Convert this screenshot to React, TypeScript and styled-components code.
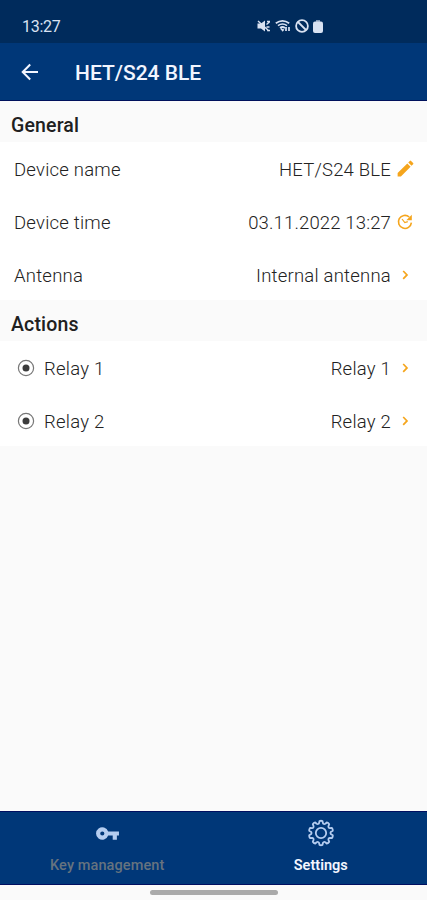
import React from "react";
import styled, { createGlobalStyle } from "styled-components";

const Global = createGlobalStyle`
  *{box-sizing:border-box}
  body{margin:0;background:#fafafa;font-family:Roboto,"Liberation Sans",sans-serif;color:#222}
  svg{display:block;flex:none}
`;
const Screen = styled.div`
  width:100%;height:900px;display:flex;flex-direction:column;background:#fafafa;overflow:hidden;
`;
const StatusBar = styled.header`
  height:43px;flex:none;background:#002b5c;color:#d9e2f2;display:flex;align-items:center;
  padding:9px 104px 0 22px;font-size:16px;justify-content:space-between;
`;
const Clock = styled.span`letter-spacing:-.25px;`;
const StatusIcons = styled.div`display:flex;align-items:center;gap:4px;`;
const AppBar = styled.div`
  height:58px;flex:none;background:#003778;border-bottom:1px solid #00115c;color:#f2f5ff;
  display:flex;align-items:center;padding-left:21px;
`;
const Title = styled.h1`
  margin:2px 0 0 36px;font-size:21px;font-weight:500;letter-spacing:0;line-height:24px;
`;
const SectionTitle = styled.h2<{ $tall?: boolean }>`
  margin:0;height:41px;flex:none;padding:${p => (p.$tall ? "4px" : "8px")} 0 0 11px;
  font-size:19.5px;line-height:${p => (p.$tall ? "41px" : "33px")};font-weight:500;letter-spacing:.15px;color:#202020;
`;
const List = styled.div<{ $height: number }>`
  height:${p => p.$height}px;flex:none;background:#fff;
`;
const Row = styled.div`
  height:53px;display:flex;align-items:center;padding:2px 12px 0 14px;font-size:18.5px;line-height:24px;
`;
const Label = styled.span<{ $spacing?: number }>`
  font-weight:350;letter-spacing:${p => p.$spacing ?? 0.22}px;
`;
const Value = styled(Label)`margin-left:auto;`;
const Trailing = styled.span`
  width:20px;height:20px;margin:-2px 0 0 4px;display:flex;align-items:center;justify-content:center;color:#f5a51c;
`;
const Radio = styled.svg`margin:-2px 9px 0 3px;`;
const Spacer = styled.div`flex:1;`;
const Tabs = styled.nav`
  height:74px;flex:none;display:flex;background:#003778;border:solid #000f60;border-width:1px 0;
`;
const Tab = styled.div<{ $active?: boolean }>`
  flex:1;display:flex;flex-direction:column;align-items:center;padding:7px 0 0 1px;
  color:${p => (p.$active ? "#f4f6ff" : "#66737f")};font-size:14.5px;line-height:18px;
  font-weight:${p => (p.$active ? 600 : 500)};letter-spacing:${p => (p.$active ? 0 : 0.1)}px;
`;
const TabIcon = styled.div`height:28px;margin-bottom:10px;display:flex;align-items:center;color:#b5cdf0;`;
const HomeArea = styled.div`height:15px;flex:none;display:flex;justify-content:center;padding-top:5px;`;
const HomeBar = styled.div`width:128px;height:5px;border-radius:3px;background:#aaa;`;

const Pencil = () => (
  <svg width="21" height="21" viewBox="0 0 24 24" fill="currentColor">
    <path d="M3 17.25V21h3.75L17.81 9.94l-3.75-3.75L3 17.25zM20.71 7.04a1 1 0 0 0 0-1.41l-2.34-2.34a1 1 0 0 0-1.41 0l-1.83 1.83 3.75 3.75 1.83-1.83z" />
  </svg>
);
const Refresh = () => (
  <svg width="18" height="18" viewBox="0 0 18 18" fill="none" stroke="currentColor" strokeWidth="1.6">
    <path d="M15.4 9.6A6.5 6.5 0 1 1 13.2 4" />
    <path d="M6 6 8.8 9.6l3-1" strokeWidth="1.2" />
    <path d="M15.8 1.7v5.5h-5.5z" fill="currentColor" stroke="none" />
  </svg>
);
const Chevron = () => (
  <svg width="7" height="10" viewBox="0 0 7 10" fill="none" stroke="currentColor" strokeWidth="1.7">
    <path d="m1.2 1 3.8 3.9-3.8 3.9" />
  </svg>
);
const RadioMark = () => (
  <Radio width="18" height="18" viewBox="0 0 18 18">
    <circle cx="9" cy="9" r="7.6" fill="none" stroke="#777" strokeWidth="1.2" />
    <circle cx="9" cy="9" r="3.5" fill="#3c3c3c" />
  </Radio>
);
const toothCount = 10;
const gearPath = Array.from({ length: toothCount }, (_, i) => {
  const step = (Math.PI * 2) / toothCount;
  const at = (r: number, offset: number) => {
    const a = i * step - Math.PI / 2 + offset * step;
    return `${(14 + r * Math.cos(a)).toFixed(2)} ${(14 + r * Math.sin(a)).toFixed(2)}`;
  };
  return `${i ? "L" : "M"}${at(12, -0.2)}Q${at(12.6, 0)} ${at(12, 0.2)}L${at(10.2, 0.3)}Q${at(8.8, 0.5)} ${at(10.2, 0.7)}`;
}).join("") + "Z";
const Gear = () => (
  <svg width="28" height="28" viewBox="0 0 28 28" fill="none" stroke="currentColor" strokeWidth="1.8" strokeLinejoin="round">
    <path d={gearPath} /><circle cx="14" cy="14" r="5.2" />
  </svg>
);
const Key = () => (
  <svg width="25" height="25" viewBox="0 0 24 24" fill="currentColor">
    <path d="M12.65 10A6 6 0 1 0 12.65 14H17v4h4v-4h2v-4H12.65zM7 14a2 2 0 1 1 0-4 2 2 0 0 1 0 4z" />
  </svg>
);

export default function App() {
  return (
    <>
      <Global />
      <Screen>
        <StatusBar>
          <Clock>13:27</Clock>
          <StatusIcons>
            <svg width="14" height="14" viewBox="0 0 14 14" fill="currentColor" stroke="currentColor">
              <path d="M.5 4.5H4l4-3v11l-4-3H.5z" stroke="none" />
              <path d="m1 2 11 10M9.5 5.5 12.5 3M9.5 8h3M10 2.5h3M10 11.5h3" strokeWidth="1.4" />
            </svg>
            <svg width="16" height="14" viewBox="0 0 16 14" fill="none" stroke="currentColor" strokeWidth="1.7">
              <path d="M.8 4.2Q7.5-.6 14.2 4.2M3 6.6q4.5-3.2 9 0M5 9q2.5-2 5 0" />
              <path d="m6 9.5 1.7 2 1-1.2" /><path d="M11 8v4M14 12V8" />
            </svg>
            <svg width="14" height="14" viewBox="0 0 14 14" fill="none" stroke="currentColor" strokeWidth="1.8">
              <circle cx="7" cy="7" r="5.9" /><path d="m3 3 8 8" />
            </svg>
            <svg width="10" height="14" viewBox="0 0 10 14" fill="currentColor">
              <rect x="3" y="1" width="4" height="2" opacity=".6" /><rect y="2.4" width="10" height="11.6" rx="2" />
            </svg>
          </StatusIcons>
        </StatusBar>
        <AppBar>
          <svg width="18" height="18" viewBox="0 0 18 18" fill="none" stroke="currentColor" strokeWidth="2">
            <path d="M17 9H2M9.2 1.5 1.7 9l7.5 7.5" />
          </svg>
          <Title>HET/S24 BLE</Title>
        </AppBar>
        <SectionTitle>General</SectionTitle>
        <List $height={158}>
          <Row><Label>Device name</Label><Value $spacing={0.2}>HET/S24 BLE</Value><Trailing><Pencil /></Trailing></Row>
          <Row><Label>Device time</Label><Value $spacing={0.15}>03.11.2022 13:27</Value><Trailing><Refresh /></Trailing></Row>
          <Row><Label>Antenna</Label><Value>Internal antenna</Value><Trailing><Chevron /></Trailing></Row>
        </List>
        <SectionTitle $tall>Actions</SectionTitle>
        <List $height={105}>
          <Row><RadioMark /><Label>Relay 1</Label><Value>Relay 1</Value><Trailing><Chevron /></Trailing></Row>
          <Row><RadioMark /><Label>Relay 2</Label><Value>Relay 2</Value><Trailing><Chevron /></Trailing></Row>
        </List>
        <Spacer />
        <Tabs>
          <Tab><TabIcon><Key /></TabIcon>Key management</Tab>
          <Tab $active><TabIcon><Gear /></TabIcon>Settings</Tab>
        </Tabs>
        <HomeArea><HomeBar /></HomeArea>
      </Screen>
    </>
  );
}
